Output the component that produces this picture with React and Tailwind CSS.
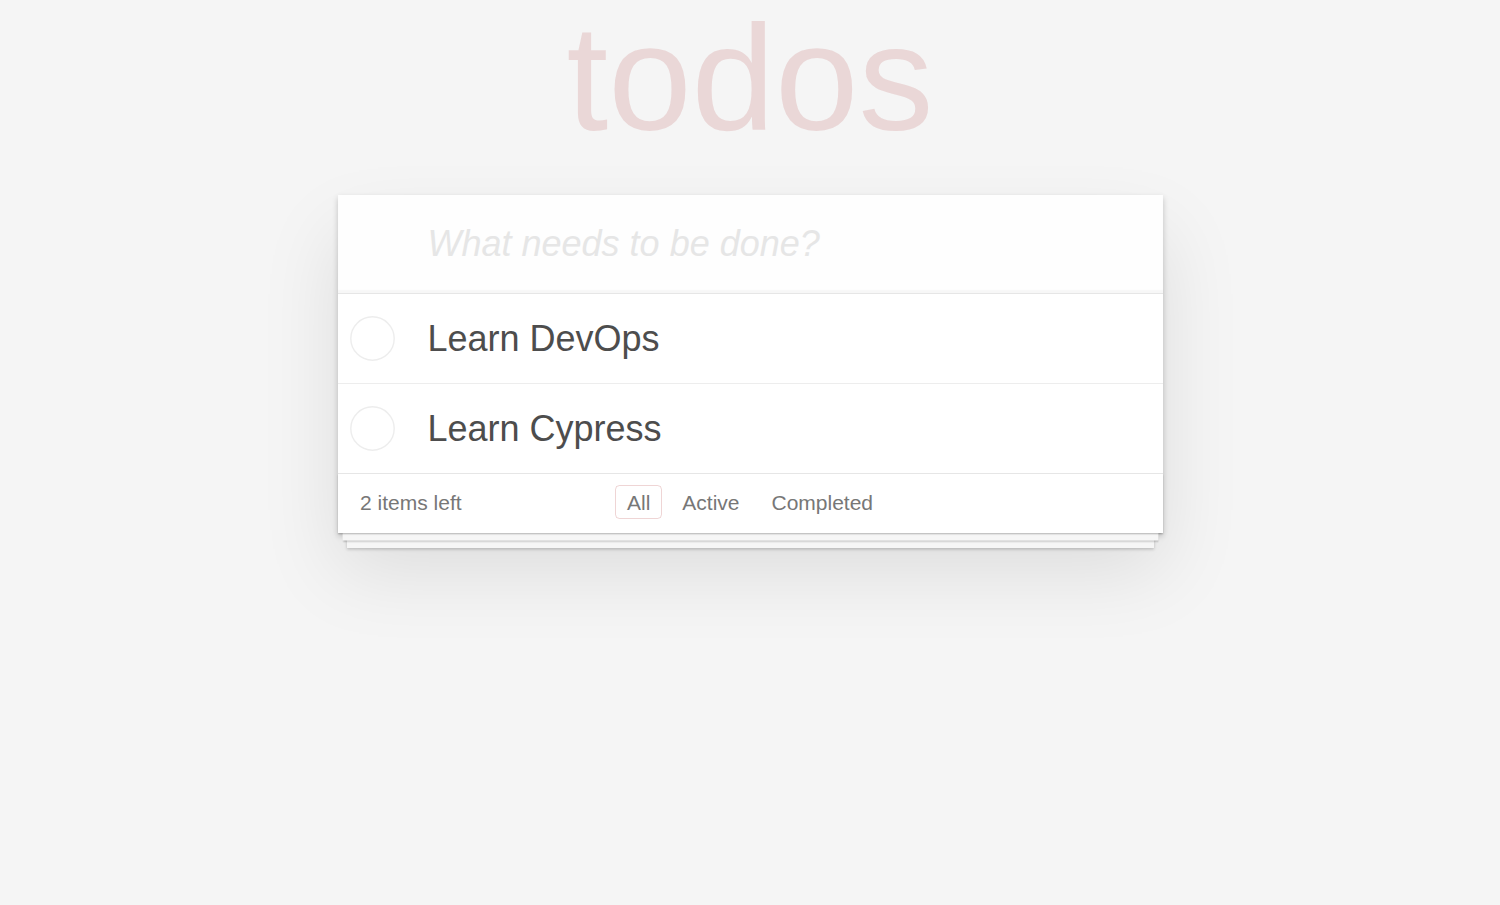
import React, { useState } from "react";

const initialTodos = [
  { id: 1, title: "Learn DevOps", completed: false },
  { id: 2, title: "Learn Cypress", completed: false },
];

const filters = ["All", "Active", "Completed"];

const ToggleCircle = () => (
  <svg width="45" height="45" viewBox="0 0 45 45" className="block shrink-0">
    <circle cx="22.5" cy="22.5" r="21.7" fill="none" stroke="#ededed" strokeWidth="1.4" />
  </svg>
);

const App = () => {
  const [todos, setTodos] = useState(initialTodos);
  const [filter, setFilter] = useState("All");
  const [text, setText] = useState("");

  const handleKeyDown = (e) => {
    if (e.key !== "Enter" || !text.trim()) return;
    setTodos((prev) => [...prev, { id: Date.now(), title: text.trim(), completed: false }]);
    setText("");
  };

  const left = todos.filter((t) => !t.completed).length;

  return (
    <div className="min-h-screen bg-[#f5f5f5] pt-[3px] font-['Liberation_Sans',Arial,sans-serif] text-[#4d4d4d]">
      <h1 className="text-center text-[150px] leading-[150px] font-thin text-[rgba(175,47,47,0.15)]">
        todos
      </h1>

      <section className="mx-auto mt-[42px] w-[825px] bg-white shadow-[0_3px_6px_0_rgba(0,0,0,0.2),0_37.5px_75px_0_rgba(0,0,0,0.1)]">
        {/* New todo */}
        <header>
          <input
            value={text}
            onChange={(e) => setText(e.target.value)}
            onKeyDown={handleKeyDown}
            placeholder="What needs to be done?"
            className="block h-[97.5px] w-full bg-[rgba(0,0,0,0.003)] py-[24px] pl-[90px] pr-[24px] text-[36px] leading-[50.4px] shadow-[inset_0_-3px_1.5px_rgba(0,0,0,0.03)] outline-none placeholder:italic placeholder:text-[#e6e6e6]"
          />
        </header>

        {/* List */}
        <main className="border-t border-[#e6e6e6]">
          <ul>
            {todos.map((todo) => (
              <li
                key={todo.id}
                className="flex items-center border-b border-[#ededed] last:border-b-0"
              >
                <div className="ml-[12px]">
                  <ToggleCircle />
                </div>
                <label className="block flex-1 py-[23px] pl-[33px] pr-[22.5px] text-[36px] leading-[43.2px]">
                  {todo.title}
                </label>
              </li>
            ))}
          </ul>
        </main>

        {/* Footer */}
        <footer className="grid h-[60px] grid-cols-[1fr_auto_1fr] border-t border-[#e6e6e6] px-[22.5px] py-[14.5px] text-[21px] leading-[29.4px] text-[#777] shadow-[0_1.5px_1.5px_rgba(0,0,0,0.2),0_12px_0_-4.5px_#f6f6f6,0_13.5px_1.5px_-4.5px_rgba(0,0,0,0.2),0_24px_0_-9px_#f6f6f6,0_25.5px_3px_-9px_rgba(0,0,0,0.2)]">
          <span className="text-left">
            <strong className="font-light">{left}</strong> {left === 1 ? "item" : "items"} left
          </span>
          <ul className="-mt-[1px] whitespace-nowrap">
            {filters.map((f) => (
              <li key={f} className="inline">
                <a
                  href="#"
                  onClick={(e) => {
                    e.preventDefault();
                    setFilter(f);
                  }}
                  className={
                    filter === f
                      ? "mx-[4.5px] rounded-[4.5px] border border-[rgba(175,47,47,0.2)] px-[10.5px] py-[4.5px]"
                      : "mx-[4.5px] rounded-[4.5px] border border-transparent px-[10.5px] py-[4.5px]"
                  }
                >
                  {f}
                </a>
              </li>
            ))}
          </ul>
          <span />
        </footer>
      </section>
    </div>
  );
};

export default App;
